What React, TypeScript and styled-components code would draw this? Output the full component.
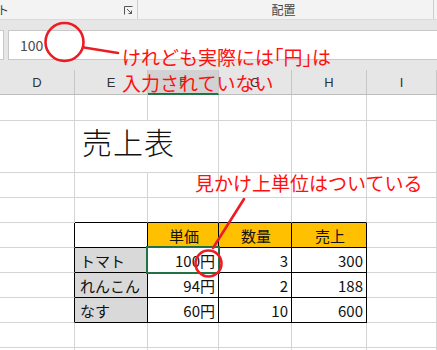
import React from "react";
import styled, { createGlobalStyle } from "styled-components";

const GlobalStyle = createGlobalStyle`
  html, body {
    margin: 0;
    padding: 0;
    background: #fff;
    overflow: hidden;
  }
  body {
    font-family: "Noto Sans CJK JP", "Noto Sans", sans-serif;
  }
`;

const Page = styled.div`
  position: relative;
  width: 437px;
  height: 350px;
  overflow: hidden;
  background: #fff;
  display: flex;
  flex-direction: column;
`;

const Ribbon = styled.div`
  height: 19px;
  background: #f3f3f3;
  border-bottom: 1px solid #dadada;
  display: flex;
  align-items: stretch;
  font-size: 12px;
  color: #444;
`;

const RibbonGroup = styled.div<{ $w: number }>`
  width: ${(p) => p.$w}px;
  box-sizing: border-box;
  border-right: 1px solid #cfcfcf;
  display: flex;
  align-items: center;
  justify-content: ${(p) => (p.$w > 200 ? "center" : "space-between")};
  padding: 1px 4px 0 0;
`;

const RibbonLabel = styled.span<{ $cut?: boolean }>`
  display: block;
  line-height: 18px;
  height: 18px;
  margin-left: ${(p) => (p.$cut ? "-3px" : "0")};
`;

const FormulaArea = styled.div`
  background: #e6e6e6;
  padding: 10px 0;
  display: flex;
  gap: 4px;
`;

const NameBox = styled.div`
  width: 4px;
  height: 30px;
  box-sizing: border-box;
  background: #fff;
  border: 1px solid #c8c8c8;
  border-left: none;
`;

const FormulaInput = styled.div`
  flex: 1;
  height: 30px;
  box-sizing: border-box;
  background: #fff;
  border: 1px solid #c8c8c8;
  border-right: none;
  display: flex;
  align-items: center;
  padding-left: 11px;
  font-size: 14px;
  color: #4a4a4a;
`;

const Sheet = styled.div`
  display: grid;
  grid-template-columns: 75px 73px 71px 73px 75px 70px;
  grid-template-rows: 25px 26px 52px 25px 25px 25px 25px 25px 25px 25px 30px;
`;

const ColHead = styled.div<{ $active?: boolean }>`
  box-sizing: border-box;
  background: ${(p) => (p.$active ? "#d2d2d2" : "#e6e6e6")};
  border-right: 1px solid #c6c6c6;
  border-bottom: ${(p) => (p.$active ? "2px solid #217346" : "1px solid #bdbdbd")};
  display: flex;
  align-items: center;
  justify-content: center;
  font-family: "Liberation Sans", "Noto Sans", sans-serif;
  font-size: 13px;
  color: ${(p) => (p.$active ? "#217346" : "#333")};
`;

type Align = "left" | "right" | "center";

const Cell = styled.div<{
  $fill?: string;
  $align?: Align;
  $rb?: boolean;
  $bb?: boolean;
  $span?: number;
  $selected?: boolean;
}>`
  position: relative;
  box-sizing: border-box;
  grid-column: span ${(p) => p.$span ?? 1};
  background: ${(p) => p.$fill ?? "#fff"};
  border-right: 1px solid ${(p) => (p.$rb ? "#000" : "#d4d4d4")};
  border-bottom: 1px solid ${(p) => (p.$bb ? "#000" : "#d4d4d4")};
  display: flex;
  align-items: center;
  justify-content: ${(p) =>
    p.$align === "right" ? "flex-end" : p.$align === "center" ? "center" : "flex-start"};
  padding: 0 3px 0 5px;
  font-size: 15px;
  color: #111;
  white-space: nowrap;
  z-index: ${(p) => (p.$selected ? 1 : 0)};

  ${(p) =>
    p.$selected &&
    `
    &::after {
      content: "";
      position: absolute;
      top: -2px;
      left: -2px;
      right: -2px;
      bottom: -2px;
      border: 2px solid #217346;
    }
  `}
`;

const Title = styled(Cell)`
  align-items: flex-end;
  padding: 0 0 9px 7px;
  font-size: 30px;
  font-weight: 300;
  color: #111;
  letter-spacing: 1px;
`;

const Overlay = styled.svg`
  position: absolute;
  left: 0;
  top: 0;
  z-index: 5;
  pointer-events: none;
`;

const Note = styled.div<{ $x: number; $y: number }>`
  position: absolute;
  z-index: 6;
  left: ${(p) => p.$x}px;
  top: ${(p) => p.$y}px;
  font-size: 19px;
  line-height: 26px;
  color: #ff1010;
  white-space: nowrap;
`;

const Bracket = styled.span`
  font-feature-settings: "halt";
`;

const Launcher = () => (
  <svg width="9" height="9" viewBox="0 0 9 9">
    <path d="M0.5 8.5V0.5H8.5" fill="none" stroke="#555" strokeWidth="1" />
    <path d="M3 3L7.5 7.5M4.5 7.5H7.5V4.5" fill="none" stroke="#555" strokeWidth="1" />
  </svg>
);

const letters = ["D", "E", "F", "G", "H", "I"];

type Spec = {
  text?: string;
  fill?: string;
  align?: Align;
  rb?: boolean;
  bb?: boolean;
  selected?: boolean;
};

const GOLD = "#ffc000";
const GRAY = "#d9d9d9";

const plainRow = (): Spec[] => letters.map(() => ({}));

const tableRow = (label: string, price: string, qty: string, total: string, sel = false): Spec[] => [
  { rb: true },
  { text: label, fill: GRAY, rb: true, bb: true },
  { text: price, align: "right", rb: true, bb: true, selected: sel },
  { text: qty, align: "right", rb: true, bb: true },
  { text: total, align: "right", rb: true, bb: true },
  {},
];

const rows: Spec[][] = [
  [{}, { bb: true }, { bb: true }, { bb: true }, { bb: true }, {}],
  [
    { rb: true },
    { rb: true, bb: true },
    { text: "単価", fill: GOLD, align: "center", rb: true, bb: true },
    { text: "数量", fill: GOLD, align: "center", rb: true, bb: true },
    { text: "売上", fill: GOLD, align: "center", rb: true, bb: true },
    {},
  ],
  tableRow("トマト", "100円", "3", "300", true),
  tableRow("れんこん", "94円", "2", "188"),
  tableRow("なす", "60円", "10", "600"),
  plainRow(),
  plainRow(),
];

const renderRow = (specs: Spec[], r: number) =>
  specs.map((c, i) => (
    <Cell
      key={`${r}-${i}`}
      $fill={c.fill}
      $align={c.align}
      $rb={c.rb}
      $bb={c.bb}
      $selected={c.selected}
    >
      {c.text}
    </Cell>
  ));

export default function App() {
  return (
    <>
      <GlobalStyle />
      <Page>
        <Ribbon>
          <RibbonGroup $w={138}>
            <RibbonLabel $cut>ト</RibbonLabel>
            <Launcher />
          </RibbonGroup>
          <RibbonGroup $w={296}>
            <RibbonLabel>配置</RibbonLabel>
          </RibbonGroup>
        </Ribbon>
        <FormulaArea>
          <NameBox />
          <FormulaInput>100</FormulaInput>
        </FormulaArea>
        <Sheet>
          {letters.map((l) => (
            <ColHead key={l} $active={l === "F"}>
              {l}
            </ColHead>
          ))}
          {renderRow(plainRow(), 0)}
          <Cell />
          <Title $span={2}>売上表</Title>
          <Cell />
          <Cell />
          <Cell />
          {renderRow(plainRow(), 1)}
          {rows.map((r, i) => renderRow(r, i + 2))}
        </Sheet>

        <Overlay width="437" height="350" viewBox="0 0 437 350">
          <g fill="none" stroke="#ec1c24" strokeWidth="2.6" strokeLinecap="round">
            <circle cx="64.5" cy="42" r="19" />
            <line x1="84" y1="47.5" x2="118" y2="53" />
            <line x1="244" y1="199" x2="213" y2="248" />
            <circle cx="208.5" cy="263.5" r="13" />
          </g>
        </Overlay>
        <Note $x={122} $y={44}>
          けれども実際には<Bracket>「</Bracket>円<Bracket>」</Bracket>は
          <br />
          入力されていない
        </Note>
        <Note $x={195} $y={170}>見かけ上単位はついている</Note>
      </Page>
    </>
  );
}
